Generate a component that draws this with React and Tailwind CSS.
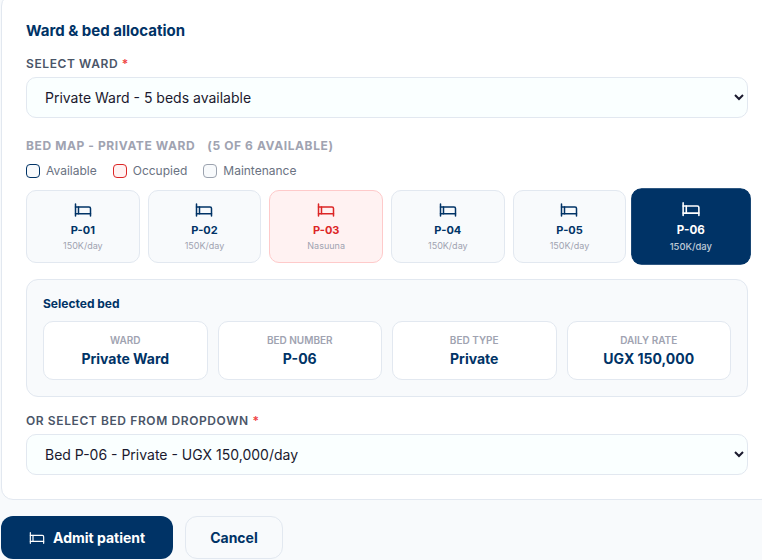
import { useState } from "react";
import { Bed } from "lucide-react";
import clsx from "clsx";

const beds = [
  { id: "P-01", status: "available", note: "150K/day" },
  { id: "P-02", status: "available", note: "150K/day" },
  { id: "P-03", status: "occupied", note: "Nasuuna" },
  { id: "P-04", status: "available", note: "150K/day" },
  { id: "P-05", status: "available", note: "150K/day" },
  { id: "P-06", status: "available", note: "150K/day" },
];

const legend = [
  { name: "Available", style: "border-[#003366] bg-slate-50" },
  { name: "Occupied", style: "border-[#dc2626] bg-[#fff2f2]" },
  { name: "Maintenance", style: "border-[#9ca3af] bg-slate-50" },
];

const SelectField = ({ id, label, value, onChange, children }) => (
  <div>
    <label
      htmlFor={id}
      className="block text-xs leading-4 font-semibold tracking-[0.6px] uppercase text-[#4a5568]"
    >
      {label} <span className="text-[#ef4444]">*</span>
    </label>
    <select
      id={id}
      value={value}
      onChange={onChange}
      className="mt-[5px] block w-full rounded-[10px] border border-slate-200 bg-[#faffff] px-3.5 py-2.5 text-sm leading-5 text-[#1a1a2e]"
    >
      {children}
    </select>
  </div>
);

const BedTile = ({ bed, selected, onSelect }) => {
  const occupied = bed.status === "occupied";

  return (
    <button
      type="button"
      disabled={occupied}
      aria-pressed={selected}
      onClick={() => onSelect(bed.id)}
      className={clsx(
        "flex flex-col items-center rounded-[10px] border pt-2.5 pb-[9px]",
        selected && "scale-105 border-[#003366] bg-[#003366] text-white",
        !selected && occupied && "border-[#fecaca] bg-[#fff2f2] text-[#dc2626]",
        !selected && !occupied && "border-slate-200 bg-slate-50 text-[#003366]"
      )}
    >
      <Bed size={18} />
      <span className="mt-[3px] text-[11px] leading-4 font-bold">{bed.id}</span>
      <span
        className={clsx(
          "mt-px text-[9px] leading-3.5",
          selected ? "font-medium text-white/75" : "text-[#a0a3b1]"
        )}
      >
        {bed.note}
      </span>
    </button>
  );
};

const App = () => {
  const [ward, setWard] = useState("private");
  const [selectedBed, setSelectedBed] = useState("P-06");

  const details = [
    { label: "Ward", value: "Private Ward" },
    { label: "Bed number", value: selectedBed },
    { label: "Bed type", value: "Private" },
    { label: "Daily rate", value: "UGX 150,000" },
  ];

  return (
    <div className="min-h-screen overflow-hidden bg-slate-50 pl-px font-['Inter',sans-serif] text-[#003366]">
      {/* Allocation card */}
      <section className="-mt-1.5 -mr-[11px] rounded-xl border border-slate-200 bg-white p-6">
        <h2 className="text-[15px] leading-6 font-bold">
          Ward &amp; bed allocation
        </h2>

        <div className="mt-[13px]">
          <SelectField
            id="ward"
            label="Select ward"
            value={ward}
            onChange={(e) => setWard(e.target.value)}
          >
            <option value="private">Private Ward - 5 beds available</option>
          </SelectField>
        </div>

        {/* Bed map */}
        <h3 className="mt-5 flex gap-3 text-xs leading-4 font-bold tracking-[0.6px] uppercase text-[#a0a3b1]">
          <span>Bed map - Private Ward</span>
          <span>(5 of 6 available)</span>
        </h3>
        <ul className="mt-2 flex gap-4 text-xs leading-[18px] text-gray-500">
          {legend.map((item) => (
            <li key={item.name} className="flex items-center gap-1.5">
              <span className={clsx("size-3.5 rounded border", item.style)} />
              {item.name}
            </li>
          ))}
        </ul>
        <div className="mt-2.5 grid grid-cols-6 gap-2">
          {beds.map((bed) => (
            <BedTile
              key={bed.id}
              bed={bed}
              selected={bed.id === selectedBed}
              onSelect={setSelectedBed}
            />
          ))}
        </div>

        {/* Selected bed summary */}
        <div className="mt-4 rounded-xl border border-slate-200 bg-slate-50 p-4">
          <h3 className="text-xs leading-4 font-bold">Selected bed</h3>
          <dl className="mt-[9px] grid grid-cols-4 gap-2.5">
            {details.map((item) => (
              <div
                key={item.label}
                className="rounded-[10px] border border-slate-200 bg-white py-2.5 text-center"
              >
                <dt className="text-[10px] leading-4 font-semibold uppercase text-[#a0a3b1]">
                  {item.label}
                </dt>
                <dd className="text-sm leading-[21px] font-bold">{item.value}</dd>
              </div>
            ))}
          </dl>
        </div>

        <div className="mt-4">
          <SelectField
            id="bed"
            label="Or select bed from dropdown"
            value={selectedBed}
            onChange={(e) => setSelectedBed(e.target.value)}
          >
            {beds
              .filter((bed) => bed.status === "available")
              .map((bed) => (
                <option key={bed.id} value={bed.id}>
                  Bed {bed.id} - Private - UGX 150,000/day
                </option>
              ))}
          </SelectField>
        </div>
      </section>

      {/* Actions */}
      <div className="mt-4 flex gap-3 text-sm leading-[21px] font-bold">
        <button
          type="submit"
          className="flex items-center gap-2 rounded-xl bg-[#003366] px-7 py-[11px] text-white"
        >
          <Bed size={16} strokeWidth={1.75} />
          Admit patient
        </button>
        <button
          type="button"
          className="rounded-xl border border-slate-200 px-6 py-2.5"
        >
          Cancel
        </button>
      </div>
    </div>
  );
};

export default App;
